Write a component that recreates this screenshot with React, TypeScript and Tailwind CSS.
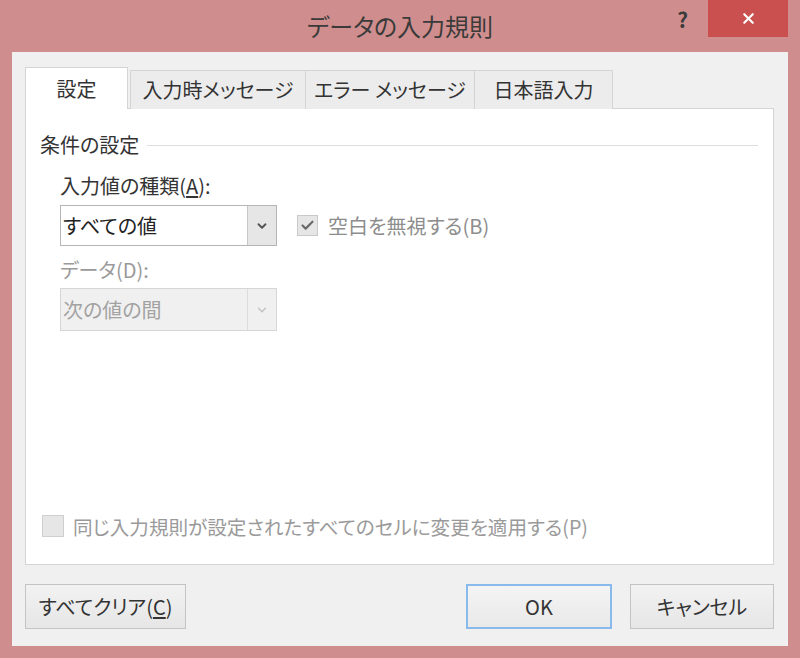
import React from 'react';
import { Check, ChevronDown, X } from 'lucide-react';

const TABS = [
  { label: '入力時メッセージ', w: 'w-[176px]' },
  { label: 'エラー メッセージ', w: 'w-[169px]' },
  { label: '日本語入力', w: 'w-[138px]' },
];

export default function App() {
  return (
    <div className="w-[800px] h-[658px] bg-[#cf8e8d] flex flex-col font-['Noto_Sans_CJK_JP','Noto_Sans',sans-serif] [font-feature-settings:'palt'] text-[#333] select-none">
      {/* Title bar */}
      <div className="h-[52px] grid grid-cols-[1fr_auto_1fr] items-start">
        <div />
        <div className="pt-[10px] text-[24px] leading-[32px] text-[#3a3a3a]">データの入力規則</div>
        <div className="flex justify-end items-start pr-[12px]">
          <span className="mt-[5px] mr-[20px] text-[21px] leading-[28px] font-bold text-[#3b3b3b]">?</span>
          <button className="w-[80px] h-[37px] bg-[#c9504f] flex items-center justify-center">
            <X className="w-[17px] h-[17px] text-white" strokeWidth={3} />
          </button>
        </div>
      </div>

      {/* Client area */}
      <div className="flex-1 mx-[12px] mb-[12px] bg-[#f0f0f0] flex flex-col pl-[13px] pr-[14px] pt-[15px] pb-[17px]">
        {/* Tabs */}
        <div className="flex items-end -mb-px relative z-10">
          <div className="w-[103px] h-[42px] bg-white border border-[#d4d4d4] border-b-0 flex items-center justify-center text-[20px]">
            設定
          </div>
          <div className="flex ml-[2px]">
            {TABS.map((t, i) => (
              <div
                key={t.label}
                className={`${t.w} h-[39px] bg-[#ececec] border border-[#d4d4d4] border-b-0 ${i > 0 ? 'border-l-0' : ''} flex items-center justify-center text-[20px] text-[#333]`}
              >
                {t.label}
              </div>
            ))}
          </div>
        </div>

        {/* Panel */}
        <div className="h-[457px] bg-white border border-[#d4d4d4] flex flex-col pt-[24px] pb-[23px]">
          <div className="flex items-center pl-[14px] pr-[15px] h-[24px]">
            <span className="text-[20px] leading-[24px]">条件の設定</span>
            <div className="flex-1 ml-[8px] h-px bg-[#dedede]" />
          </div>

          <div className="pl-[34px] flex flex-col">
            <div className="mt-[17px] text-[20px] leading-[24px]">
              入力値の種類(<span className="underline underline-offset-2">A</span>):
            </div>

            <div className="mt-[7px] flex items-center">
              <div className="w-[217px] h-[41px] border border-[#b5b5b5] bg-white flex">
                <div className="flex-1 flex items-center pl-[2px] text-[20px] text-[#222]">すべての値</div>
                <div className="w-[29px] bg-[#e6e6e6] border-l border-[#c8c8c8] flex items-center justify-center">
                  <ChevronDown className="w-[14px] h-[14px] text-[#555]" strokeWidth={3.2} />
                </div>
              </div>
              <div className="ml-[20px] w-[21px] h-[21px] bg-[#e6e6e6] border border-[#c9c9c9] flex items-center justify-center">
                <Check className="w-[15px] h-[15px] text-[#6a6a6a]" strokeWidth={3.4} />
              </div>
              <span className="ml-[10px] text-[20px] text-[#8d8d8d]">空白を無視する(B)</span>
            </div>

            <div className="mt-[12px] text-[20px] leading-[24px] text-[#9a9a9a]">データ(D):</div>

            <div className="mt-[6px] w-[217px] h-[43px] border border-[#d6d6d6] bg-[#f0f0f0] flex">
              <div className="flex-1 flex items-center pl-[2px] text-[20px] text-[#a2a2a2]">次の値の間</div>
              <div className="w-[29px] border-l border-[#dcdcdc] flex items-center justify-center">
                <ChevronDown className="w-[14px] h-[14px] text-[#c2c2c2]" strokeWidth={2.4} />
              </div>
            </div>
          </div>

          <div className="flex-1" />

          <div className="pl-[16px] flex items-center">
            <div className="w-[22px] h-[22px] bg-[#e6e6e6] border border-[#cfcfcf]" />
            <span className="ml-[9px] text-[19.6px] text-[#9a9a9a]">
              同じ入力規則が設定されたすべてのセルに変更を適用する(P)
            </span>
          </div>
        </div>

        {/* Buttons */}
        <div className="mt-[19px] flex items-center">
          <button className="w-[161px] h-[45px] bg-gradient-to-b from-[#f2f2f2] to-[#e6e6e6] border border-[#c4c4c4] text-[20px] text-[#333]">
            すべてクリア(<span className="underline underline-offset-2">C</span>)
          </button>
          <div className="flex-1" />
          <button className="w-[146px] h-[45px] bg-gradient-to-b from-[#f4f4f4] to-[#e9e9e9] border-2 border-[#88bbec] text-[20px] text-[#333]">
            OK
          </button>
          <button className="ml-[18px] w-[144px] h-[45px] bg-gradient-to-b from-[#f2f2f2] to-[#e6e6e6] border border-[#c4c4c4] text-[20px] text-[#333]">
            キャンセル
          </button>
        </div>
      </div>
    </div>
  );
}
